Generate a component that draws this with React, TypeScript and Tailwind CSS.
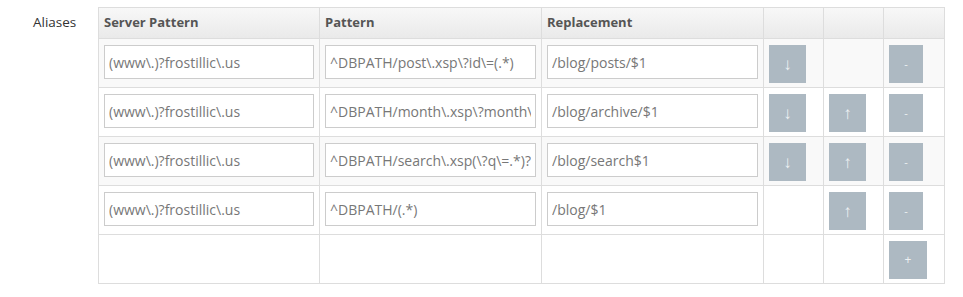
type Alias = {
    server: string;
    pattern: string;
    replacement: string;
    down: boolean;
    up: boolean;
}

const aliases: Alias[] = [
    { server: '(www\\.)?frostillic\\.us', pattern: '^DBPATH/post\\.xsp\\?id\\=(.*)', replacement: '/blog/posts/$1', down: true, up: false },
    { server: '(www\\.)?frostillic\\.us', pattern: '^DBPATH/month\\.xsp\\?month\\=(.*)', replacement: '/blog/archive/$1', down: true, up: true },
    { server: '(www\\.)?frostillic\\.us', pattern: '^DBPATH/search\\.xsp(\\?q\\=.*)?', replacement: '/blog/search$1', down: true, up: true },
    { server: '(www\\.)?frostillic\\.us', pattern: '^DBPATH/(.*)', replacement: '/blog/$1', down: false, up: true },
];

const cell = "border border-[#dddddd] align-top px-[5px] pt-[6px] pb-[4px]";
const input = "block w-full h-[34px] border border-[#cccccc] bg-white px-[4px] text-[14px] text-[#777777] outline-none";
const btn = "h-[38px] bg-[#adb9c2] text-[#eef1f3] flex items-center justify-center";
const arrow = "font-['Liberation_Sans'] text-[17px] leading-none";

const Field = ({ value }: { value: string }) => (
    <input type="text" defaultValue={value} className={input} />
)

export default function App() {
    return (
        <div className="bg-white w-[963px] h-[297px] flex pt-[7px]" style={{ fontFamily: '"Open Sans", "Liberation Sans", sans-serif' }}>
            <div className="w-[98px] pl-[33px] pt-[5px] text-[13.5px] text-[#333333]">Aliases</div>

            <table className="border-collapse border border-[#dddddd] table-fixed w-[847px] h-fit">
                <thead>
                    <tr className="h-[31px] bg-gradient-to-b from-[#f8f8f8] to-[#e9e9e9]">
                        <th className="w-[221px] border border-[#dddddd] text-left px-[5px] text-[13px] font-bold text-[#555555]">Server Pattern</th>
                        <th className="w-[222px] border border-[#dddddd] text-left px-[5px] text-[13px] font-bold text-[#555555]">Pattern</th>
                        <th className="w-[222px] border border-[#dddddd] text-left px-[5px] text-[13px] font-bold text-[#555555]">Replacement</th>
                        <th className="w-[60px] border border-[#dddddd]"></th>
                        <th className="w-[60px] border border-[#dddddd]"></th>
                        <th className="w-[61px] border border-[#dddddd]"></th>
                    </tr>
                </thead>
                <tbody>
                    {aliases.map((a, i) => (
                        <tr key={i} className={i % 2 === 0 ? 'bg-[#f9f9f9]' : 'bg-white'}>
                            <td className={cell}><Field value={a.server} /></td>
                            <td className={cell}><Field value={a.pattern} /></td>
                            <td className={cell}><Field value={a.replacement} /></td>
                            <td className={cell}>
                                {a.down && <div className={`${btn} w-[37px]`}><span className={arrow}>↓</span></div>}
                            </td>
                            <td className={cell}>
                                {a.up && <div className={`${btn} w-[37px]`}><span className={arrow}>↑</span></div>}
                            </td>
                            <td className={cell}>
                                <div className={`${btn} w-[34px] text-[11px]`}>-</div>
                            </td>
                        </tr>
                    ))}
                    {/* add row */}
                    <tr className="bg-white">
                        <td className={cell}></td>
                        <td className={cell}></td>
                        <td className={cell}></td>
                        <td className={cell}></td>
                        <td className={cell}></td>
                        <td className={cell}>
                            <div className={`${btn} w-[38px] text-[12px]`}>+</div>
                        </td>
                    </tr>
                </tbody>
            </table>
        </div>
    )
}
